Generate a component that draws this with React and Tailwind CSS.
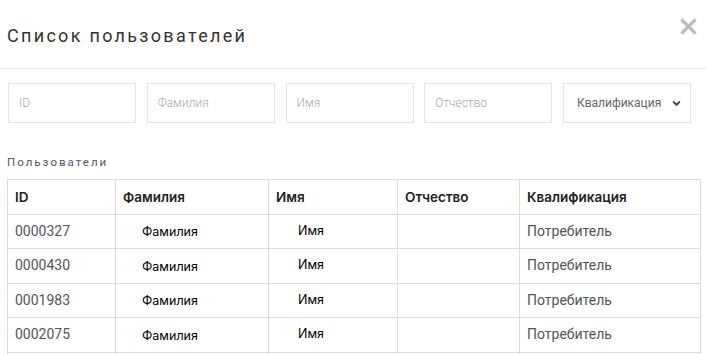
import { ChevronDown } from 'lucide-react';

const users = [
    { id: '0000327', lastName: 'Фамилия', firstName: 'Имя', role: 'Потребитель' },
    { id: '0000430', lastName: 'Фамилия', firstName: 'Имя', role: 'Потребитель' },
    { id: '0001983', lastName: 'Фамилия', firstName: 'Имя', role: 'Потребитель' },
    { id: '0002075', lastName: 'Фамилия', firstName: 'Имя', role: 'Потребитель' },
];

export default function App() {
    return (
        <div className="w-[706px] h-[354px] overflow-hidden bg-white" style={{ fontFamily: "Roboto, 'Liberation Sans', sans-serif" }}>
            <div className="h-[69px] flex items-center justify-between border-b border-[#e6e6e6] pl-[7px] pr-[9px]">
                <h1 className="text-[18px] tracking-[2.3px] text-[#333] pt-[2px]">Список пользователей</h1>
                <button className="text-[#bdbdbd] -mt-[16px]">
                    <svg width="17" height="17" viewBox="0 0 16 16">
                        <path d="M2.5 2.5 L13.5 13.5 M13.5 2.5 L2.5 13.5" stroke="currentColor" strokeWidth="3.2" strokeLinecap="square" />
                    </svg>
                </button>
            </div>

            <div className="flex gap-[10.75px] pl-[8px] mt-[14px]">
                {['ID', 'Фамилия', 'Имя', 'Отчество'].map((p) => (
                    <input
                        key={p}
                        placeholder={p}
                        className="w-[128px] h-[40px] border border-[#e4e4e4] px-[10px] text-[12px] font-light text-[#555] placeholder-[#a8a8a8] outline-none"
                    />
                ))}
                <div className="w-[128px] h-[40px] border border-[#e4e4e4] flex items-center justify-between pl-[13px] pr-[8px] text-[12px] text-[#666]">
                    <span>Квалификация</span>
                    <ChevronDown size={11} strokeWidth={4.5} className="text-[#444]" />
                </div>
            </div>

            <div className="mt-[31px] pl-[7px] text-[11.5px] tracking-[2px] text-[#555] leading-[16px]">Пользователи</div>

            <table className="table-fixed border-collapse ml-[7px] mt-[9px] w-[693px] text-[14px]">
                <colgroup>
                    <col className="w-[108px]" />
                    <col className="w-[153px]" />
                    <col className="w-[129px]" />
                    <col className="w-[122px]" />
                    <col className="w-[181px]" />
                </colgroup>
                <thead>
                    <tr className="h-[34.5px]">
                        {['ID', 'Фамилия', 'Имя', 'Отчество', 'Квалификация'].map((h) => (
                            <th key={h} className="border border-[#dcdcdc] text-left text-[#222] px-[7px]" style={{ fontFamily: "Inter, sans-serif" }}>
                                <span className="text-[13.5px] font-semibold">{h}</span>
                            </th>
                        ))}
                    </tr>
                </thead>
                <tbody>
                    {users.map((u) => (
                        <tr key={u.id} className="h-[34.5px]">
                            <td className="border border-[#dcdcdc] px-[7px] text-[#555]">{u.id}</td>
                            <td className="border border-[#dcdcdc] pl-[26px] pt-[3px] text-[12.5px] text-[#000]" style={{ fontFamily: "Inter, sans-serif" }}>{u.lastName}</td>
                            <td className="border border-[#dcdcdc] pl-[29px] text-[12.5px] text-[#000]" style={{ fontFamily: "Inter, sans-serif" }}>{u.firstName}</td>
                            <td className="border border-[#dcdcdc] px-[7px]"></td>
                            <td className="border border-[#dcdcdc] px-[7px] text-[#555]">{u.role}</td>
                        </tr>
                    ))}
                    <tr className="h-[34.5px]">
                        <td className="border border-[#dcdcdc]"></td>
                        <td className="border border-[#dcdcdc]"></td>
                        <td className="border border-[#dcdcdc]"></td>
                        <td className="border border-[#dcdcdc]"></td>
                        <td className="border border-[#dcdcdc]"></td>
                    </tr>
                </tbody>
            </table>
        </div>
    );
}
